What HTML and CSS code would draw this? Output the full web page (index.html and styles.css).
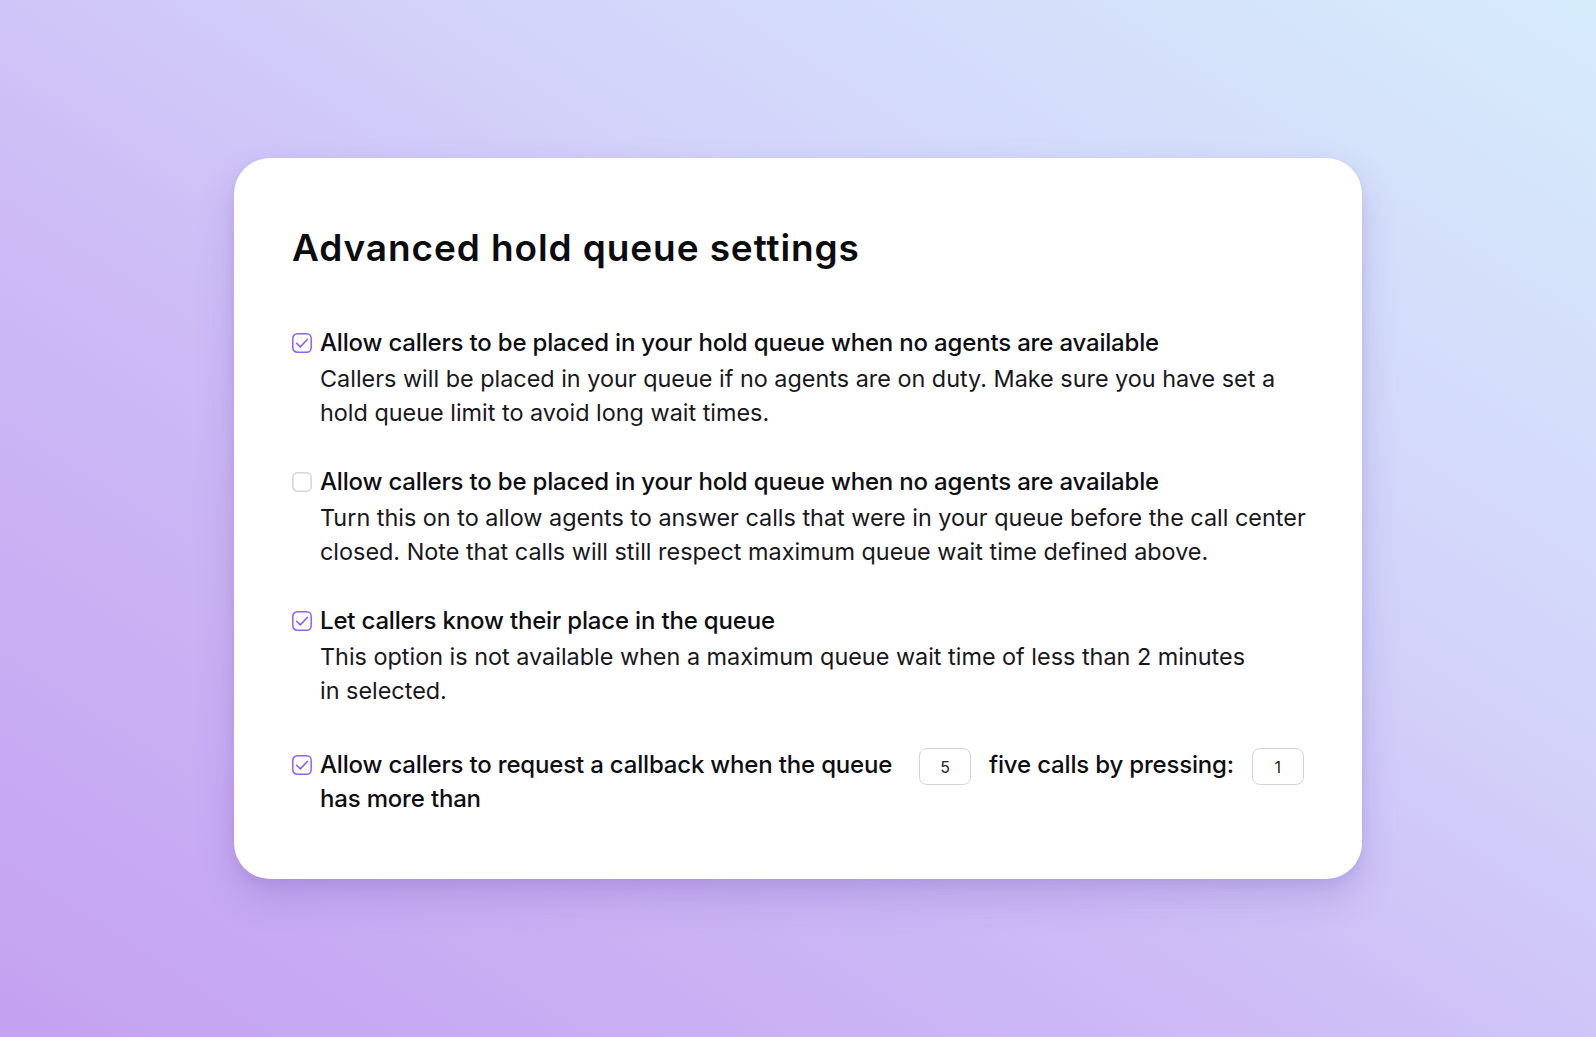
FILE: index.html
```html
<!DOCTYPE html>
<html lang="en">
<head>
<meta charset="utf-8">
<title>Advanced hold queue settings</title>
<link rel="stylesheet" href="styles.css">
</head>
<body>
<main class="stage">
  <section class="card">
    <h1 class="card-title">Advanced hold queue settings</h1>

    <ul class="options">
      <li class="option">
        <span class="check is-on">
          <svg viewBox="0 0 20 20" width="20" height="20"><rect x="0.8" y="0.8" width="18.4" height="18.4" rx="4.5"/><path d="M4.6 10.3l3.7 3.6 7.2-7.6"/></svg>
        </span>
        <div class="option-body">
          <div class="option-label">Allow callers to be placed in your hold queue when no agents are available</div>
          <p class="option-desc">Callers will be placed in your queue if no agents are on duty. Make sure you have set a<br>hold queue limit to avoid long wait times.</p>
        </div>
      </li>

      <li class="option">
        <span class="check">
          <svg viewBox="0 0 20 20" width="20" height="20"><rect x="0.8" y="0.8" width="18.4" height="18.4" rx="4.5"/></svg>
        </span>
        <div class="option-body">
          <div class="option-label">Allow callers to be placed in your hold queue when no agents are available</div>
          <p class="option-desc">Turn this on to allow agents to answer calls that were in your queue before the call center<br>closed. Note that calls will still respect maximum queue wait time defined above.</p>
        </div>
      </li>

      <li class="option">
        <span class="check is-on">
          <svg viewBox="0 0 20 20" width="20" height="20"><rect x="0.8" y="0.8" width="18.4" height="18.4" rx="4.5"/><path d="M4.6 10.3l3.7 3.6 7.2-7.6"/></svg>
        </span>
        <div class="option-body">
          <div class="option-label">Let callers know their place in the queue</div>
          <p class="option-desc">This option is not available when a maximum queue wait time of less than 2 minutes<br>in selected.</p>
        </div>
      </li>

      <li class="option option-callback">
        <span class="check is-on">
          <svg viewBox="0 0 20 20" width="20" height="20"><rect x="0.8" y="0.8" width="18.4" height="18.4" rx="4.5"/><path d="M4.6 10.3l3.7 3.6 7.2-7.6"/></svg>
        </span>
        <div class="callback-row">
          <div class="option-label callback-label">Allow callers to request a callback when the queue<br>has more than</div>
          <span class="num-field">5</span>
          <span class="option-label">five calls by pressing:</span>
          <span class="num-field">1</span>
        </div>
      </li>
    </ul>
  </section>
</main>
</body>
</html>
```

FILE: styles.css
```css
* {
  box-sizing: border-box;
}

html,
body {
  margin: 0;
  height: 100%;
}

body {
  font-family: "Inter", "Noto Sans", "Liberation Sans", sans-serif;
  color: #111114;
  background: linear-gradient(to top right, #c4a1f1 0%, #cdbbf6 40%, #d3d4fa 65%, #d6ecfb 100%);
}

.stage {
  height: 100%;
  display: flex;
  align-items: center;
  justify-content: center;
}

.card {
  width: 1128px;
  background: #ffffff;
  border-radius: 36px;
  padding: 68px 58px 63px;
  box-shadow: 0 18px 36px rgba(96, 64, 170, 0.22), 0 4px 10px rgba(96, 64, 170, 0.08);
}

.card-title {
  margin: 0 0 56px;
  font-size: 37px;
  line-height: 44px;
  font-weight: 600;
  letter-spacing: 0.9px;
  color: #0c0c0f;
}

.options {
  list-style: none;
  margin: 0;
  padding: 0;
  display: flex;
  flex-direction: column;
  gap: 35px;
}

.option {
  display: flex;
  align-items: flex-start;
  gap: 8px;
}

.check {
  flex: none;
  width: 20px;
  height: 20px;
  margin-top: 7px;
  display: block;
}

.check svg {
  display: block;
  fill: none;
}

.check rect {
  stroke: #d6d6da;
  stroke-width: 1.5;
}

.check.is-on rect,
.check.is-on path {
  stroke: #8d60f5;
}

.check path {
  stroke-width: 1.6;
  stroke-linecap: round;
  stroke-linejoin: round;
}

.option-body {
  flex: 1;
  min-width: 0;
}

.option-label {
  font-size: 24px;
  line-height: 34px;
  font-weight: 500;
  letter-spacing: -0.18px;
  color: #0e0e12;
  white-space: nowrap;
}

.option-desc {
  margin: 2px 0 0;
  font-size: 23.4px;
  line-height: 34px;
  font-weight: 400;
  color: #18181c;
  white-space: nowrap;
}

.option-callback {
  margin-top: 5px;
}

.callback-row {
  display: flex;
  align-items: flex-start;
}

.callback-label {
  width: 599px;
}

.num-field {
  flex: none;
  width: 52px;
  height: 37px;
  border: 1px solid #d4d4d8;
  border-radius: 8px;
  display: flex;
  align-items: center;
  justify-content: center;
  font-size: 16px;
  color: #222;
}

.num-field + .option-label {
  margin: 0 18px 0 18px;
}
```
